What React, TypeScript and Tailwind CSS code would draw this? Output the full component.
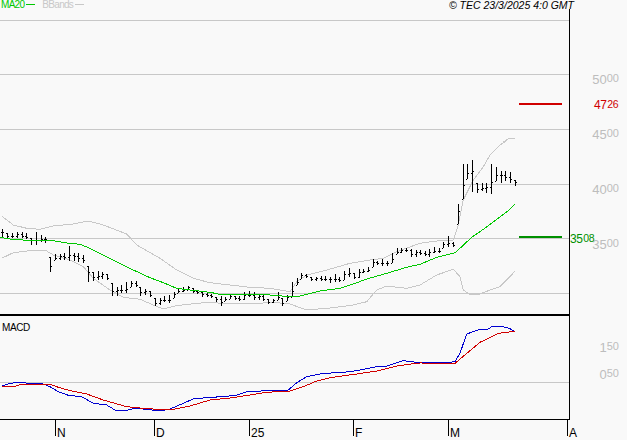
const GRID_PRICE = [20, 74, 129, 184, 238, 293];
const TICKS = [
  { label: "N", width: "w-[99px]" },
  { label: "D", width: "w-[95px]" },
  { label: "25", width: "w-[104px]" },
  { label: "F", width: "w-[95px]" },
  { label: "M", width: "w-[119px]" },
  { label: "A", width: "w-[20px]" },
];
const SCALE_PRICE = [
  { big: "50", small: "00" },
  { big: "45", small: "00" },
  { big: "40", small: "00" },
  { big: "35", small: "00" },
];

type Pt = [number, number];

// points were read off the 3x crops, so scale them back to page pixels
const scale = (ox: number, oy: number, pts: Pt[]): Pt[] => pts.map(([x, y]) => [ox + x / 3, oy + y / 3]);
const toPath = (pts: Pt[]) => pts.map(([x, y]) => `${x.toFixed(1)},${y.toFixed(1)}`).join(" ");

const ma20 = [
  ...scale(0, 210, [[0, 82], [30, 87], [70, 90], [100, 93], [130, 91], [160, 92], [200, 99], [240, 103], [262, 112], [290, 125], [340, 150], [400, 180], [450, 203], [490, 218], [530, 235], [570, 240], [630, 247]]),
  ...scale(210, 210, [[40, 255], [120, 253], [180, 255], [240, 260], [270, 258], [330, 243], [390, 235], [430, 222], [470, 207], [530, 190], [590, 172], [630, 163]]),
  ...scale(420, 140, [[50, 352], [105, 338], [120, 325], [155, 292], [190, 268], [230, 238], [270, 208], [285, 192]]),
];

const bbUpper = [
  ...scale(0, 210, [[5, 18], [40, 45], [80, 55], [120, 58], [160, 48], [220, 42], [265, 33], [310, 45], [380, 72], [410, 105], [480, 145], [530, 180], [580, 205], [630, 218]]),
  ...scale(210, 210, [[60, 225], [120, 232], [180, 235], [240, 245], [260, 215], [290, 195], [340, 183], [420, 160], [480, 150], [520, 145], [560, 125], [630, 100]]),
  ...scale(420, 140, [[50, 303], [100, 300], [115, 255], [130, 180], [160, 120], [190, 80], [210, 45], [240, 15], [262, 0]]),
  [503, 142], [510, 138], [515, 138],
] as Pt[];

const bbLower = [
  ...scale(0, 210, [[5, 145], [40, 128], [80, 123], [135, 120], [160, 135], [210, 150], [250, 170], [280, 205], [330, 240], [370, 262], [420, 268], [460, 285], [490, 297], [530, 287], [590, 280], [630, 277]]),
  ...scale(210, 210, [[60, 282], [120, 280], [200, 278], [240, 282], [290, 300], [370, 293], [430, 285], [470, 275], [500, 240], [530, 228], [590, 235], [630, 225]]),
  ...scale(420, 140, [[50, 405], [100, 388], [120, 410], [130, 450], [150, 464], [180, 462], [210, 450], [240, 440], [270, 410], [285, 393]]),
];

const macd = [
  ...scale(0, 310, [[5, 228], [25, 222], [50, 217], [90, 220], [130, 222], [150, 230], [175, 245], [205, 256], [245, 260], [280, 280], [320, 285], [345, 300], [385, 300], [405, 295], [440, 298], [480, 303], [510, 297], [550, 280], [580, 267], [630, 262]]),
  ...scale(210, 310, [[40, 260], [80, 255], [115, 244], [195, 242], [235, 240], [260, 218], [290, 200], [340, 190], [390, 188], [440, 182], [500, 170], [530, 168], [580, 152], [630, 158]]),
  ...scale(420, 310, [[20, 158], [80, 158], [105, 155], [120, 130], [140, 72], [180, 58], [200, 60], [215, 50], [250, 50], [270, 56], [285, 66]]),
];

const signal = [
  ...scale(0, 310, [[5, 231], [40, 230], [60, 224], [150, 223], [175, 232], [210, 242], [260, 252], [310, 270], [380, 290], [430, 295], [470, 298], [520, 298], [570, 288], [630, 270]]),
  ...scale(210, 310, [[60, 264], [120, 255], [170, 247], [240, 243], [280, 230], [320, 213], [360, 203], [440, 192], [500, 183], [560, 168], [610, 161], [630, 159]]),
  ...scale(420, 310, [[105, 160], [150, 122], [180, 97], [235, 70], [285, 64]]),
];

// [x, top, bottom] of each price bar, in crop units (y counted from 210)
const bars: [number, number, number][] = [
  [7, 58, 80], [22, 68, 84], [37, 70, 84], [51, 65, 84], [65, 65, 84], [79, 70, 86], [94, 85, 106], [108, 65, 106], [122, 75, 95], [136, 80, 100],
  [151, 142, 186], [165, 132, 150], [179, 132, 150], [193, 130, 150], [207, 108, 152], [221, 130, 152], [235, 130, 155], [250, 135, 160], [265, 168, 215], [279, 185, 212],
  [293, 182, 210], [307, 185, 208], [322, 192, 210], [335, 220, 258], [350, 230, 258], [364, 225, 250], [379, 215, 250], [393, 212, 232], [407, 212, 232], [421, 232, 258],
  [436, 238, 255], [450, 242, 262], [464, 265, 288], [479, 265, 285], [493, 258, 276], [507, 255, 278], [521, 245, 265], [535, 235, 248], [549, 230, 245], [563, 228, 240],
  [578, 235, 250], [592, 240, 252], [606, 245, 260], [620, 248, 260],
  [634, 253, 264], [648, 262, 275], [662, 258, 288], [676, 260, 272], [690, 256, 268], [704, 258, 270], [718, 258, 272], [732, 245, 270], [748, 242, 262], [762, 245, 270],
  [776, 252, 270], [790, 255, 272], [805, 268, 282], [819, 266, 280], [833, 245, 270], [847, 265, 288], [862, 255, 272], [876, 215, 260], [890, 205, 225], [904, 190, 207],
  [919, 192, 205], [933, 200, 214], [947, 200, 214], [962, 198, 212], [976, 198, 212], [990, 200, 220], [1004, 192, 215], [1018, 200, 215], [1032, 182, 210], [1048, 175, 200],
  [1062, 188, 208], [1076, 178, 205], [1090, 178, 190], [1104, 170, 185], [1118, 148, 170], [1132, 152, 165], [1147, 148, 168], [1161, 152, 168], [1175, 128, 160], [1190, 115, 132],
  [1204, 115, 128], [1218, 115, 125], [1232, 118, 140], [1247, 120, 140],
  [1260, 120, 135], [1274, 122, 138], [1288, 118, 140], [1302, 112, 128], [1316, 115, 130], [1330, 95, 115], [1345, 78, 112], [1360, 95, 112],
  [1374, -18, 42], [1388, -138, -32], [1402, -138, -92], [1417, -150, -55], [1431, -80, -50], [1445, -82, -58], [1459, -82, -50], [1474, -138, -48], [1488, -130, -88], [1502, -118, -80],
  [1516, -118, -88], [1530, -114, -80], [1545, -90, -72],
];

const ohlc = bars.map(([x3, t3, b3]) => ({
  x: Math.round(x3 / 3),
  top: Math.round(210 + t3 / 3),
  bottom: Math.round(210 + b3 / 3),
}));

function OhlcBars() {
  let lastClose = ohlc[0].top + 3;
  return (
    <g stroke="#000" strokeWidth="1" shapeRendering="crispEdges">
      {ohlc.map((b, i) => {
        const open = Math.min(b.bottom, Math.max(b.top, lastClose));
        const close = b.top + Math.round((b.bottom - b.top) * (i % 3 === 0 ? 0.35 : 0.6));
        lastClose = close;
        return (
          <g key={b.x}>
            <line x1={b.x + 0.5} x2={b.x + 0.5} y1={b.top} y2={b.bottom} />
            <line x1={b.x - 1} x2={b.x} y1={open + 0.5} y2={open + 0.5} />
            <line x1={b.x + 1} x2={b.x + 2} y1={close + 0.5} y2={close + 0.5} />
          </g>
        );
      })}
    </g>
  );
}

function ScaleLabel({ big, small }: { big: string; small: string }) {
  return (
    <div className="flex items-start justify-end pr-[8px] leading-none text-[#bdbdbd]">
      <span className="text-[13px]">{big}</span>
      <span className="text-[11px]">{small}</span>
    </div>
  );
}

function LevelLabel({ big, small, className }: { big: string; small: string; className: string }) {
  return (
    <div className={`absolute flex items-start leading-none ${className}`}>
      <span className="text-[12px] tracking-[-0.5px]">{big}</span>
      <span className="text-[10.5px] tracking-[-0.5px] ml-[1px]">{small}</span>
    </div>
  );
}

export default function App() {
  return (
    <div className="w-[627px] h-[440px] overflow-hidden flex flex-col bg-[#f9f9f9] font-['Liberation_Sans',sans-serif]">
      {/* Top legend + copyright */}
      <div className="h-[9px] flex items-start justify-between pl-[1px] pr-[53px] text-[10px] leading-[10px]">
        <div className="flex items-start tracking-[-0.7px]">
          <span className="text-[#00c800]">MA20</span>
          <span className="w-[9px] h-px mt-[4px] ml-[2px] bg-[#00c800]" />
          <span className="ml-[7px] text-[#c8c8c8]">BBands</span>
          <span className="w-[9px] h-px mt-[4px] ml-[2px] bg-[#c8c8c8]" />
        </div>
        <span className="text-[10.5px] italic text-black whitespace-nowrap">© TEC 23/3/2025 4:0 GMT</span>
      </div>

      <div className="flex flex-1 min-h-0">
        <div className="w-[570px] shrink-0 flex flex-col">
          <div className="border-r border-black flex flex-col">
            {/* Price panel */}
            <div className="h-[307px] border-b-2 border-black">
              <svg className="block" width="569" height="305" viewBox="0 9 569 305" fill="none" shapeRendering="crispEdges">
                <g stroke="#c8c8c8">
                  {GRID_PRICE.map((y) => (
                    <line key={y} x1="0" x2="569" y1={y + 0.5} y2={y + 0.5} />
                  ))}
                </g>
                <polyline points={toPath(bbUpper)} stroke="#c8c8c8" />
                <polyline points={toPath(bbLower)} stroke="#c8c8c8" />
                <OhlcBars />
                <polyline points={toPath(ma20)} stroke="#00c800" />
                <rect x="519" y="103" width="43" height="2" fill="#d00000" />
                <rect x="519" y="236" width="43" height="2" fill="#009000" />
              </svg>
            </div>

            {/* MACD panel */}
            <div className="relative h-[104px] border-b border-black pl-[2px] pt-[7px]">
              <svg className="absolute left-0 top-0" width="569" height="103" viewBox="0 316 569 103" fill="none" shapeRendering="crispEdges">
                <line x1="0" x2="569" y1="382.5" y2="382.5" stroke="#c8c8c8" />
                <polyline points={toPath(macd)} stroke="#0000d0" />
                <polyline points={toPath(signal)} stroke="#d00000" />
              </svg>
              <span className="relative block text-[10px] leading-[10px] tracking-[-0.4px] text-black">MACD</span>
            </div>
          </div>

          {/* Month ticks */}
          <div className="flex pl-[55px]">
            {TICKS.map((t) => (
              <div key={t.label} className={`${t.width} h-[16px] shrink-0 border-l border-black pl-[1px] pt-[7px] text-[12px] leading-[12px] text-black`}>
                {t.label}
              </div>
            ))}
          </div>
        </div>

        {/* Right scale */}
        <div className="relative flex-1 flex flex-col pt-[64px]">
          {SCALE_PRICE.map((s) => (
            <div key={s.big} className="h-[55px] shrink-0">
              <ScaleLabel big={s.big} small={s.small} />
            </div>
          ))}
          <div className="h-[27px] shrink-0 mt-[48px]">
            <ScaleLabel big="1" small="50" />
          </div>
          <ScaleLabel big="0" small="50" />
          <LevelLabel big="47" small="26" className="left-[24px] top-[90px] text-[#d00000]" />
          <LevelLabel big="35" small="08" className="left-0 top-[224px] text-[#009000]" />
        </div>
      </div>
    </div>
  );
}
